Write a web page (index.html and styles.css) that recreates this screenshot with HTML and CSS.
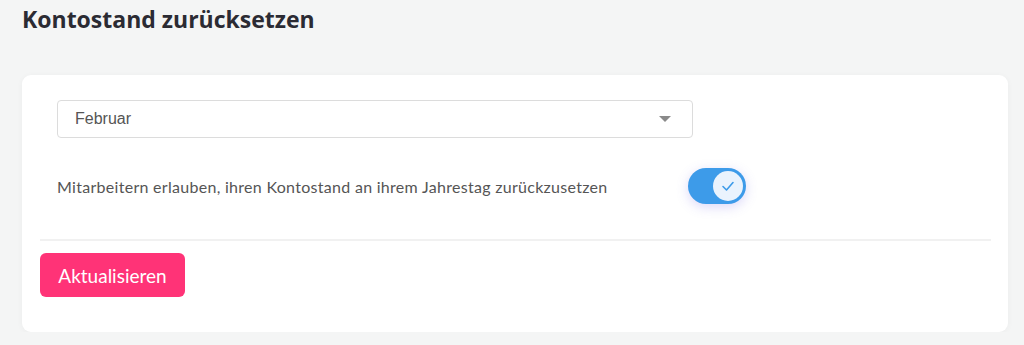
FILE: index.html
```html
<!DOCTYPE html>
<html lang="de">

<head>
    <meta charset="UTF-8">
    <meta name="viewport" content="width=device-width, initial-scale=1.0">
    <title>Kontostand zurücksetzen</title>
    <link rel="stylesheet" href="styles.css">
</head>

<body>
    <h1 class="titulo">Kontostand zurücksetzen</h1>
    <div class="tarjeta">
        <div class="selector">
            <span class="selectorTexto">Februar</span>
            <span class="flecha"></span>
        </div>
        <div class="fila">
            <p class="etiqueta">Mitarbeitern erlauben, ihren Kontostand an ihrem Jahrestag zurückzusetzen</p>
            <div class="interruptor">
                <div class="bola">
                    <svg width="14" height="12" viewBox="0 0 14 12">
                        <path d="M2 6.5 L5.5 10 L12 2.5" fill="none" stroke="#3d9be9" stroke-width="1.6" stroke-linecap="round" stroke-linejoin="round" />
                    </svg>
                </div>
            </div>
        </div>
        <div class="separador"></div>
        <button class="boton">Aktualisieren</button>
    </div>
</body>

</html>
```

FILE: styles.css
```css
html {
    font-family: Lato, 'Liberation Sans', sans-serif;
}

body {
    background-color: #f4f5f5;
    margin: 0;
    padding: 0 16px 0 22px;
}

.titulo {
    margin: 0;
    padding-top: 4px;
    font-family: 'Open Sans', Lato, sans-serif;
    font-size: 23px;
    line-height: 30px;
    font-weight: 700;
    color: #2b2b33;
}

.tarjeta {
    margin-top: 41px;
    background: #fff;
    border-radius: 9px;
    box-shadow: 0 1px 6px rgba(0, 0, 0, 0.04);
    padding: 25px 17px 35px 18px;
}

.selector {
    display: flex;
    align-items: center;
    justify-content: space-between;
    margin-left: 17px;
    height: 36px;
    border: 1px solid #dcdcdc;
    border-radius: 4px;
    padding: 0 21px 0 17px;
    box-sizing: content-box;
    width: 596px;
}

.selectorTexto {
    font-family: 'Liberation Sans', Arial, sans-serif;
    font-size: 16px;
    color: #555;
}

.flecha {
    width: 0;
    height: 0;
    border-left: 6px solid transparent;
    border-right: 6px solid transparent;
    border-top: 6px solid #8a8a8a;
}

.fila {
    display: flex;
    align-items: center;
    justify-content: space-between;
    width: 689px;
    margin: 30px 0 0 17px;
}

.etiqueta {
    margin: 0;
    font-size: 16px;
    letter-spacing: 0.29px;
    color: #555;
}

.interruptor {
    display: flex;
    align-items: center;
    justify-content: flex-end;
    width: 58px;
    height: 36px;
    padding-right: 3px;
    box-sizing: border-box;
    border-radius: 18px;
    background-color: #3d9be9;
    box-shadow: 0 3px 12px rgba(110, 100, 230, 0.25);
}

.bola {
    display: flex;
    align-items: center;
    justify-content: center;
    width: 30px;
    height: 30px;
    border-radius: 50%;
    background-color: #eaf3fd;
}

.separador {
    height: 2px;
    background-color: #f1f1f1;
    margin-top: 35px;
}

.boton {
    margin-top: 12px;
    width: 145px;
    height: 44px;
    border: none;
    border-radius: 6px;
    background-color: #ff3377;
    color: #fff;
    font-family: Lato, 'Liberation Sans', sans-serif;
    font-size: 19px;
}
```
